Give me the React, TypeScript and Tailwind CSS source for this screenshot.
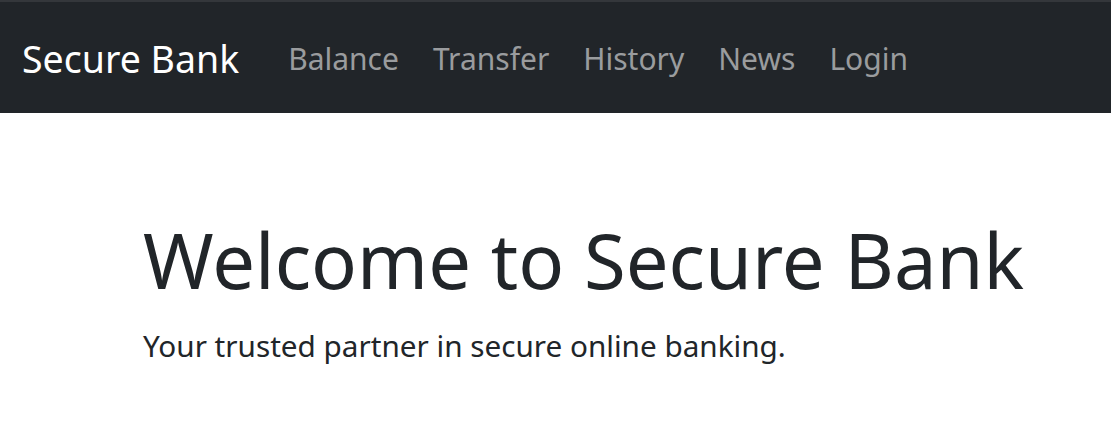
import React from "react"

const links = ["Balance", "Transfer", "History", "News", "Login"]

const App = (): JSX.Element => {
  return (
    <div className="min-h-[440px] bg-white" style={{ fontFamily: '"Noto Sans", "Open Sans", sans-serif' }}>
      {/* Navbar */}
      <nav className="h-[113px] bg-[#212529] border-t-2 border-[#34373b] flex items-center px-[22px] pt-[3px]">
        <span className="text-[37.5px] leading-none text-white mr-[32px]">Secure Bank</span>
        <div className="flex items-center">
          {links.map((l) => (
            <a key={l} href="#" className="px-[17px] text-[30px] leading-none text-[#9a9c9e]">
              {l}
            </a>
          ))}
        </div>
      </nav>

      {/* Hero */}
      <div className="pl-[143px] pt-[101px]">
        <h1 className="text-[76px] leading-[1.2] text-[#212529]">Welcome to Secure Bank</h1>
        <p className="text-[29.7px] leading-normal text-[#212529] mt-[19px]">
          Your trusted partner in secure online banking.
        </p>
      </div>
    </div>
  )
}

export default App
